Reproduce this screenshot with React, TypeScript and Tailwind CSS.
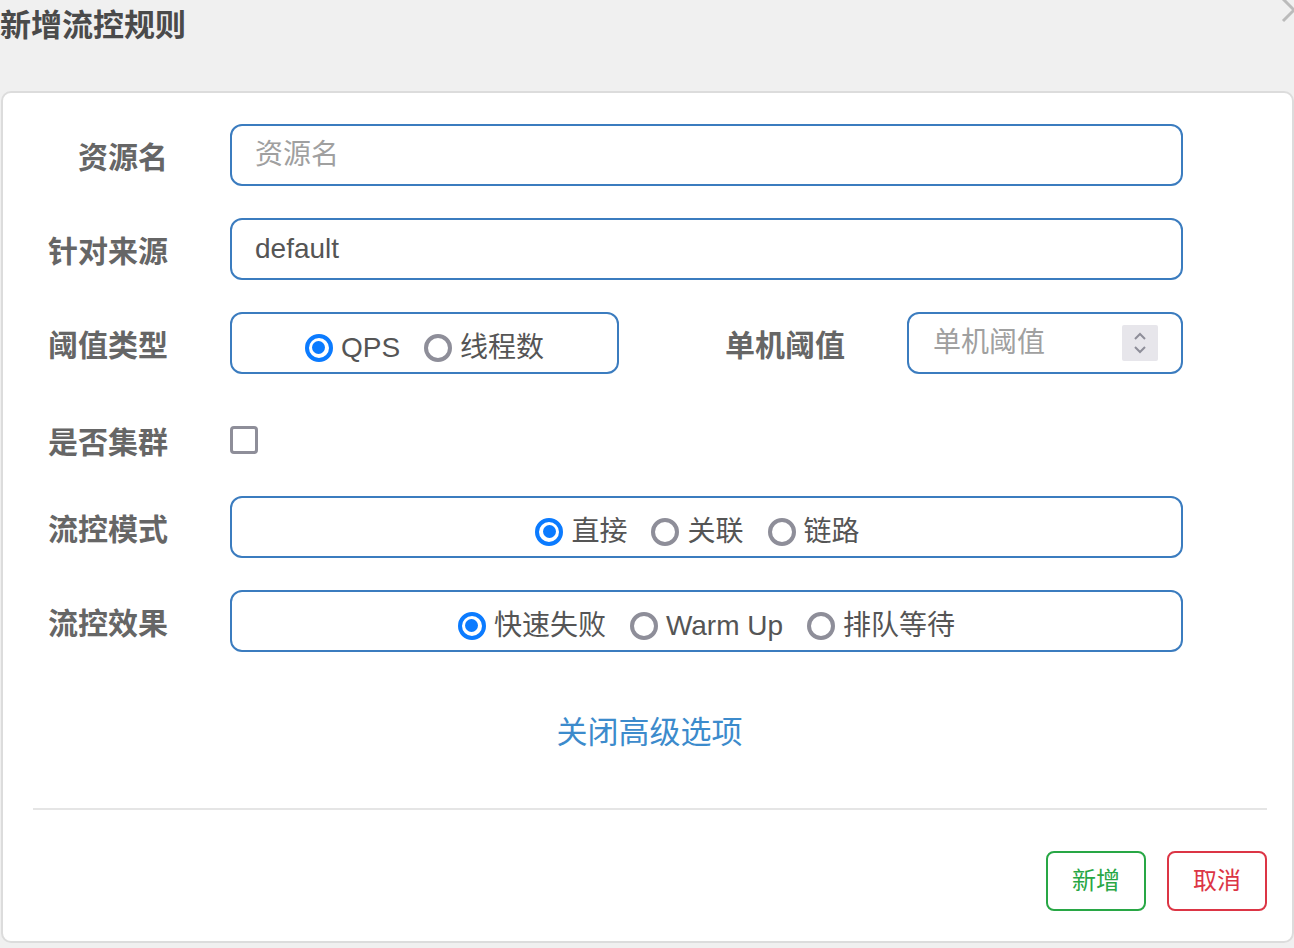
import React from 'react'

const font = { fontFamily: '"Liberation Sans", "Noto Sans CJK SC", sans-serif' }

function Radio({ label, checked }: { label: string; checked?: boolean }) {
  return (
    <span className="flex items-center gap-2">
      {checked ? (
        <span className="flex h-[28px] w-[28px] items-center justify-center rounded-full border-[4px] border-[#0b7bff]">
          <span className="h-[13px] w-[13px] rounded-full bg-[#0b7bff]" />
        </span>
      ) : (
        <span className="h-[28px] w-[28px] rounded-full border-[4px] border-[#8e8e99]" />
      )}
      <span className="text-[28px] text-[#555]">{label}</span>
    </span>
  )
}

function Label({ children }: { children: React.ReactNode }) {
  return <div className="w-[165px] shrink-0 pt-[4px] text-right text-[30px] font-bold text-[#666]">{children}</div>
}

export default function App() {
  return (
    <div className="relative h-[948px] w-[1294px] overflow-hidden bg-[#f0f0f0]" style={font}>
      {/* close */}
      <svg className="absolute left-[1280px] top-[-4px]" width="28" height="28" viewBox="0 0 28 28">
        <path d="M3 3 L25 25 M25 3 L3 25" stroke="#bbb" strokeWidth="3" fill="none" />
      </svg>

      <div className="h-[91px]">
        <h1 className="text-[31px] font-bold leading-[51px] text-[#4a4a4a]">新增流控规则</h1>
      </div>

      <div className="ml-[1px] h-[852px] w-[1293px] rounded-[10px] border-2 border-[#dcdcdc] bg-white pt-[31px]">
        <div className="flex flex-col gap-[32px]">
          <div className="flex items-center">
            <Label>资源名</Label>
            <div className="ml-[62px] flex h-[62px] w-[953px] items-center rounded-[12px] border-2 border-[#3b7cbf] px-[23px] text-[28px] text-[#a0a0a0]">
              资源名
            </div>
          </div>

          <div className="flex items-center">
            <Label>针对来源</Label>
            <div className="ml-[62px] flex h-[62px] w-[953px] items-center rounded-[12px] border-2 border-[#3b7cbf] px-[23px] text-[28px] text-[#555]">
              default
            </div>
          </div>

          <div className="flex items-center">
            <Label>阈值类型</Label>
            <div className="ml-[62px] flex h-[62px] w-[389px] items-center justify-center gap-[24px] rounded-[12px] border-2 border-[#3b7cbf] pt-[9px]">
              <Radio label="QPS" checked />
              <Radio label="线程数" />
            </div>
            <div className="w-[226px] pt-[4px] text-right text-[30px] font-bold text-[#666]">单机阈值</div>
            <div className="ml-[62px] flex h-[62px] w-[276px] items-center justify-between rounded-[12px] border-2 border-[#3b7cbf] pl-[24px] pr-[23px] text-[28px] text-[#a0a0a0]">
              <span>单机阈值</span>
              <span className="flex h-[36px] w-[36px] items-center justify-center rounded-[2px] bg-[#e7e6eb]">
                <svg width="14" height="24" viewBox="0 0 14 24">
                  <path d="M2 8 L7 3 L12 8 M2 16 L7 21 L12 16" stroke="#8e8e99" strokeWidth="2" fill="none" />
                </svg>
              </span>
            </div>
          </div>

          <div className="flex h-[58px] items-center pt-[10px]">
            <Label>是否集群</Label>
            <span className="ml-[62px] h-[28px] w-[28px] rounded-[4px] border-[3.5px] border-[#8e8e99]" />
          </div>

          <div className="flex items-center">
            <Label>流控模式</Label>
            <div className="ml-[62px] flex h-[62px] w-[953px] items-center justify-center gap-[24px] rounded-[12px] border-2 border-[#3b7cbf] pr-[18px] pt-[9px]">
              <Radio label="直接" checked />
              <Radio label="关联" />
              <Radio label="链路" />
            </div>
          </div>

          <div className="flex items-center">
            <Label>流控效果</Label>
            <div className="ml-[62px] flex h-[62px] w-[953px] items-center justify-center gap-[24px] rounded-[12px] border-2 border-[#3b7cbf] pt-[9px]">
              <Radio label="快速失败" checked />
              <Radio label="Warm Up" />
              <Radio label="排队等待" />
            </div>
          </div>
        </div>

        <div className="mt-[60px] flex justify-center pl-[4px]">
          <span className="text-[31px] leading-[42px] text-[#3c8bcc]">关闭高级选项</span>
        </div>

        <div className="ml-[30px] mr-[25px] mt-[54px] h-[2px] bg-[#e5e5e5]" />

        <div className="mt-[41px] flex justify-end gap-[21px] pr-[25px]">
          <button className="h-[60px] w-[100px] rounded-[8px] border-2 border-[#28a745] text-[24px] text-[#28a745]">新增</button>
          <button className="h-[60px] w-[100px] rounded-[8px] border-2 border-[#dc3545] text-[24px] text-[#dc3545]">取消</button>
        </div>
      </div>
    </div>
  )
}
